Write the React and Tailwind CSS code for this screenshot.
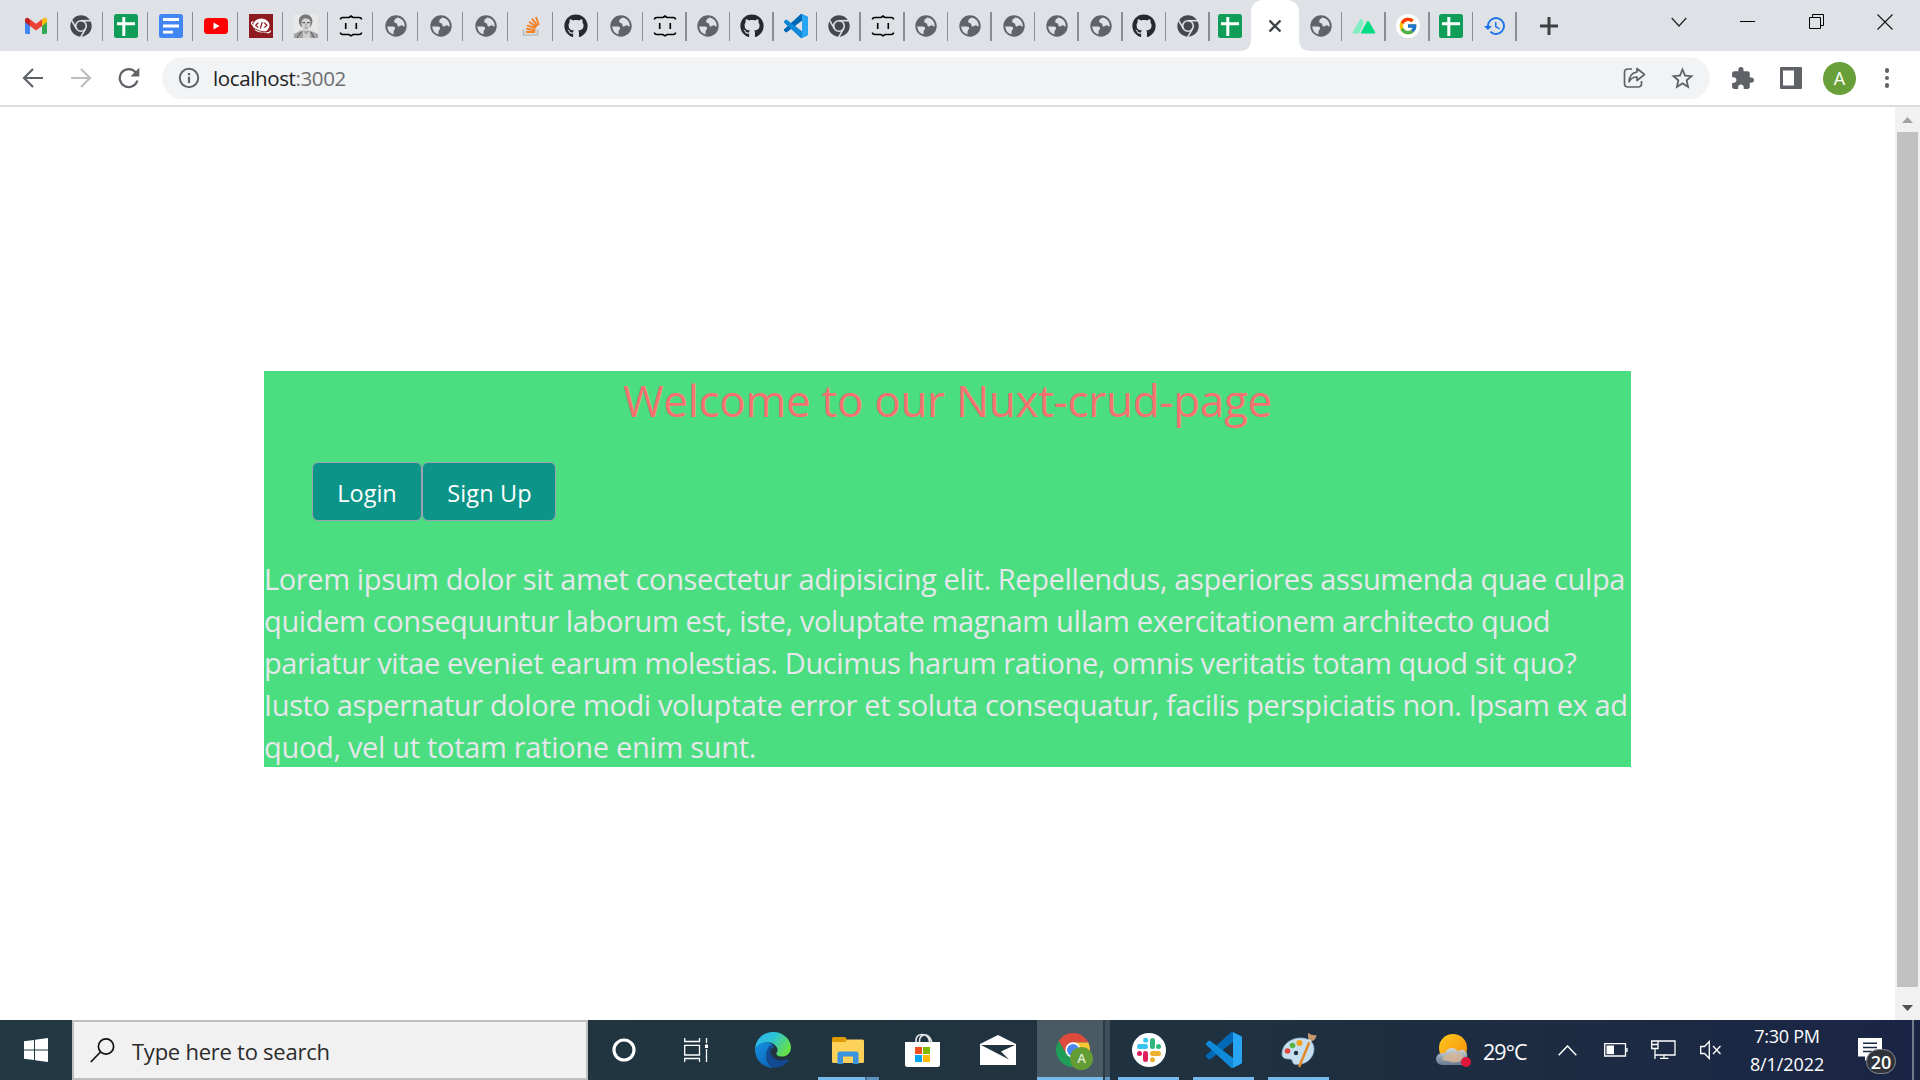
import React from "react";
import { FaGithub } from "react-icons/fa";
import { FcGoogle } from "react-icons/fc";
import { MdHistory, MdExtension, MdStarBorder } from "react-icons/md";

const VS_PATH =
  "M23.15 2.587L18.21.21a1.494 1.494 0 0 0-1.705.29l-9.46 8.63-4.12-3.128a.999.999 0 0 0-1.276.057L.327 7.261A1 1 0 0 0 .326 8.74L3.899 12 .326 15.26a1 1 0 0 0 .001 1.479L1.65 17.94a.999.999 0 0 0 1.276.057l4.12-3.128 9.46 8.63a1.492 1.492 0 0 0 1.704.29l4.942-2.377A1.5 1.5 0 0 0 24 20.06V3.939a1.5 1.5 0 0 0-.85-1.352zm-5.146 14.861L10.826 12l7.178-5.448v10.896z";

function VSCode({ size = 24 }) {
  return (
    <svg width={size} height={size} viewBox="0 0 24 24">
      <path d={VS_PATH} fill="#0a7fcf" />
      <path d="M.33 15.26a1 1 0 0 0 0 1.48l1.32 1.2a1 1 0 0 0 1.28.06L17.99 6.55V.1a1.5 1.5 0 0 0-1.5.4z" fill="#0069b5" />
      <path d="M.33 8.74a1 1 0 0 1 0-1.48l1.32-1.2a1 1 0 0 1 1.28-.06L17.99 17.45V23.9a1.5 1.5 0 0 1-1.5-.4z" fill="#1089d8" />
      <path d="M18 .12L23.15 2.59A1.5 1.5 0 0 1 24 3.94V20.06a1.5 1.5 0 0 1-.85 1.35L18 23.88z" fill="#27a5f2" />
    </svg>
  );
}

function Gmail() {
  return (
    <svg width="24" height="24" viewBox="0 0 24 24">
      <path d="M1 6v12.5A1.5 1.5 0 0 0 2.500 20H6V11z" fill="#4285f4" />
      <path d="M23 6v12.500A1.500 1.500 0 0 1 21.500 20H18V11z" fill="#34a853" />
      <path d="M18 5.500V12l5-4V6c0-2.200-2.400-2.900-3.800-1.800z" fill="#fbbc04" />
      <path d="M6 5.500V12L1 8V6c0-2.200 2.400-2.900 3.800-1.800z" fill="#c5221f" />
      <path d="M6 5.200l6 4.500 6-4.500V12l-6 4.500L6 12z" fill="#ea4335" />
    </svg>
  );
}

function ChromeGray() {
  return (
    <svg width="24" height="24" viewBox="0 0 24 24">
      <circle cx="12" cy="12" r="10.7" fill="#45494d" />
      <g stroke="#dee1e6" strokeWidth="1.6" fill="none">
        <circle cx="12" cy="12" r="5.300" />
        <path d="M12 6.700H23" />
        <path d="M12 6.700H23" transform="rotate(120 12 12)" />
        <path d="M12 6.700H23" transform="rotate(240 12 12)" />
      </g>
    </svg>
  );
}

function Sheets() {
  return (
    <svg width="24" height="24" viewBox="0 0 24 24">
      <rect width="24" height="24" rx="2.500" fill="#0f9d58" />
      <path d="M3 9.800H21M9.800 3V22" stroke="#fff" strokeWidth="3" />
    </svg>
  );
}

function Docs() {
  return (
    <svg width="24" height="24" viewBox="0 0 24 24">
      <rect width="24" height="24" rx="2.500" fill="#4285f4" />
      <path d="M4 5.500H20M4 12H20M4 18.200H14" stroke="#fff" strokeWidth="2.800" />
    </svg>
  );
}

function YouTube() {
  return (
    <svg width="24" height="24" viewBox="0 0 24 24">
      <rect y="4" width="24" height="16" rx="3.500" fill="#f00" />
      <path d="M9.500 8.600v6.800l6-3.400z" fill="#fff" />
    </svg>
  );
}

function CodePlanet() {
  return (
    <svg width="24" height="24" viewBox="0 0 24 24">
      <rect width="24" height="24" fill="#8e1b20" />
      <ellipse cx="12.300" cy="11.500" rx="8.200" ry="7" fill="#fff" />
      <path d="M4.500 8C1 7.500 2 11 8 14.800S21.500 20.300 21.500 16.500" fill="none" stroke="#fff" strokeWidth="1.200" />
      <path d="M9.300 8.800l-2.600 2.400 2.600 2.400M15.300 8.800l2.600 2.400-2.600 2.400M13.300 8l-2 6.500" fill="none" stroke="#8e1b20" strokeWidth="1.200" />
      <path d="M5 14.300q6 4 13 3.800" fill="none" stroke="#8e1b20" strokeWidth=".900" />
    </svg>
  );
}

function Portrait() {
  return (
    <svg width="24" height="24" viewBox="0 0 24 24">
      <rect width="24" height="24" fill="#e8e8e8" />
      <path d="M0 24v-4l7-3.500h9l8 3.500v4z" fill="#a2a2a2" />
      <path d="M5 9C4 2 9 0 12.500.500S19.500 4 18 10l-1.500 3H7z" fill="#777" />
      <path d="M7.500 8Q9 3.500 12 4.500Q16 4 16.500 8Q17 13 13.500 16.500Q11.500 18 9.800 16.500Q7 13 7.500 8Z" fill="#d2d2d2" />
      <path d="M8.500 8.600h2.600M13 8.600h2.600" stroke="#5c5c5c" strokeWidth="1.200" />
      <path d="M12 9.500v3M10.300 14h3.600" stroke="#8a8a8a" strokeWidth=".900" />
      <path d="M9 17l3 3.500 4-3.500v7H9z" fill="#cfcfcf" />
      <path d="M3 24l4-6M20 24l-3-6" stroke="#555" />
    </svg>
  );
}

function Braces() {
  return (
    <svg width="24" height="24" viewBox="0 0 24 24" fill="none" stroke="#000" strokeWidth="1.600">
      <path d="M1.500 5.500Q1.500 3.500 4 3.500H10L12 2L14 3.500H20Q22.500 3.500 22.500 5.500" />
      <path d="M1.500 18.500Q1.500 20.500 4 20.500H10L12 21.800L14 20.500H20Q22.500 20.500 22.500 18.500" />
      <path d="M6.700 9V15M17.300 9V15" />
    </svg>
  );
}

function Globe() {
  return (
    <svg width="24" height="24" viewBox="0 0 24 24">
      <circle cx="12" cy="12" r="10.700" fill="#606367" />
      <path d="M13.500 3.400C10.500 5 9.800 6.300 10.300 8C10.800 9.300 12.200 8.600 13 9.700C13.700 10.800 12.900 12 14.300 12.500C15.900 13 16.200 11.200 17.700 11.300C19.200 11.400 19 12.800 20.800 12.500A8.800 8.800 0 0 0 13.500 3.400Z" fill="#dee1e6" />
      <path d="M3.200 12.500H8.600C10.500 12.500 11.300 13.300 11.100 14.600C11 15.700 9.900 15.800 9.700 17C9.500 18.300 9.500 19 9.500 20.400A8.900 8.900 0 0 1 3.200 12.500Z" fill="#dee1e6" />
    </svg>
  );
}

function Nuxt() {
  return (
    <svg width="24" height="24" viewBox="0 0 24 24">
      <path d="M1.500 19.500Q.300 19.500 1 18L8 5.500Q9 4 10 5.300L12 8.500L7 19.500Z" fill="#80eec0" />
      <path d="M9.500 19.500Q8.500 19.500 9.200 18L15 7.600Q16 6.200 17 7.600L23 18Q23.800 19.500 22.300 19.500Z" fill="#00dc82" />
    </svg>
  );
}

function GoogleIcon() {
  return (
    <span className="grid size-6 place-items-center rounded-full bg-white">
      <FcGoogle size={20} />
    </span>
  );
}

const GitHub = () => <FaGithub size={24} color="#24292f" />;
const History = () => <MdHistory size={24} color="#1a73e8" />;

function StackOverflow() {
  return (
    <svg width="24" height="24" viewBox="0 0 24 24" fill="none">
      <path d="M4.500 15.500V21H18.500V15.500" stroke="#bcbbbb" strokeWidth="1.700" />
      <g stroke="#f48024" strokeWidth="1.900">
        <path d="M7 18H16.200M7.200 14.700L16.300 16.200M8 11.300L16.700 14.200M10 7.700L17.600 12.900M13 4.700L18.600 12M17 3L19.800 11" />
      </g>
    </svg>
  );
}

function Tab({ icon: I, wide }) {
  return (
    <div
      className={
        "relative flex shrink-0 items-center justify-center " +
        (wide ? "w-[45px]" : "w-[43.6px]")
      }
    >
      <I />
      <span className="absolute right-0 top-[12px] h-[29px] w-[1.5px] bg-[#8a8d92]" />
    </div>
  );
}

const WIDE = [Gmail, ChromeGray, Sheets, Docs, YouTube, CodePlanet, Portrait, Braces, Globe, Globe, Globe, StackOverflow, GitHub, Globe];
const NARROW = [Braces, Globe, GitHub, VSCode, ChromeGray, Braces, Globe, Globe, Globe, Globe, Globe, GitHub, ChromeGray];
const AFTER = [Globe, Nuxt, GoogleIcon, Sheets, History];

function TabStrip() {
  return (
    <div className="flex h-[51px] bg-[#dee1e6] pl-[13px]">
      {WIDE.map((I, i) => <Tab key={i} icon={I} wide />)}
      {NARROW.map((I, i) => <Tab key={i} icon={I} />)}
      <div className="flex w-[41px] shrink-0 items-center justify-center"><Sheets /></div>
      <div className="relative flex w-[48px] shrink-0 items-center justify-center rounded-t-[12px] bg-white">
        <svg className="absolute bottom-0 -left-[10px]" width="10" height="12"><path d="M10 0V12H0Q10 11 10 0Z" fill="#fff" /></svg>
        <svg className="absolute bottom-0 -right-[10px]" width="10" height="12"><path d="M0 0V12H10Q0 11 0 0Z" fill="#fff" /></svg>
        <svg width="14" height="14" viewBox="0 0 14 14"><path d="M1.500 1.500L12.500 12.500M12.500 1.500L1.500 12.500" stroke="#3c4043" strokeWidth="2.300" /></svg>
      </div>
      {AFTER.map((I, i) => <Tab key={i} icon={I} />)}
      <div className="flex w-[64px] items-center justify-center">
        <svg width="18" height="18" viewBox="0 0 18 18"><path d="M9 0V18M0 9H18" stroke="#3c4043" strokeWidth="3" /></svg>
      </div>
      <div className="ml-auto flex h-[43px] items-center">
        <div className="grid w-[68px] place-items-center"><svg width="16" height="10" viewBox="0 0 16 10" fill="none"><path d="M.700 1L8 9L15.300 1" stroke="#222" strokeWidth="1.200" /></svg></div>
        <div className="grid w-[69px] place-items-center"><div className="h-px w-[15px] bg-black" /></div>
        <div className="grid w-[69px] place-items-center">
          <svg width="15" height="15" viewBox="0 0 15 15" fill="none" stroke="#000"><path d="M.500 3.500H11.500V14.500H.500ZM3.500 3.500V.500H14.500V11.500H11.500" /></svg>
        </div>
        <div className="grid w-[69px] place-items-center pr-px">
          <svg width="16" height="16" viewBox="0 0 16 16"><path d="M.500 .500L15.500 15.500M15.500 .500L.500 15.500" stroke="#111" strokeWidth="1.100" /></svg>
        </div>
      </div>
    </div>
  );
}

function Toolbar() {
  return (
    <div className="flex h-[56px] items-center border-b-2 border-[#dadce0] bg-white pl-[9px] text-[#5f6368]">
      <div className="grid w-[48px] place-items-center">
        <svg width="22" height="22" viewBox="0 0 22 22" fill="none" stroke="#5f6368" strokeWidth="2.200"><path d="M21 11H2.500M11 2L2 11L11 20" /></svg>
      </div>
      <div className="grid w-[48px] place-items-center">
        <svg width="22" height="22" viewBox="0 0 22 22" fill="none" stroke="#bcbec0" strokeWidth="2.200"><path d="M1 11H19.500M11 2L20 11L11 20" /></svg>
      </div>
      <div className="grid w-[48px] place-items-center">
        <svg width="22" height="22" viewBox="0 0 22 22"><path d="M17.800 5.500A9 9 0 1 0 19.400 13.500" fill="none" stroke="#5f6368" strokeWidth="2.200" /><path d="M21.300 .800V9.500H12.500Z" fill="#5f6368" /></svg>
      </div>
      <div className="ml-[9px] flex h-[42px] w-[1548px] items-center rounded-full bg-[#f1f3f4] pl-[16px] pr-[14px]">
        <svg width="22" height="22" viewBox="0 0 22 22"><circle cx="11" cy="11" r="9.200" fill="none" stroke="#5f6368" strokeWidth="2" /><path d="M11 9.800V16M11 6V8.200" stroke="#5f6368" strokeWidth="2.200" /></svg>
        <span className="ml-[13px] text-[20.5px] leading-[30px] tracking-[-0.38px] text-[#202124]">
          localhost<span className="text-[#6b6f73]">:3002</span>
        </span>
        <svg className="ml-auto" width="24" height="24" viewBox="0 0 24 24" fill="none" stroke="#5f6368" strokeWidth="1.700" strokeLinejoin="round">
          <path d="M10 3H6Q2.500 3 2.500 6.500V17.500Q2.500 21 6 21H16Q19.500 21 19.500 17.500V15" />
          <path d="M15 2.500L22.500 8.500L15 14.500V11Q9.500 11 7 15.800Q7.500 7 15 6Z" />
        </svg>
        <MdStarBorder className="ml-[23px]" size={27} color="#5f6368" />
      </div>
      <div className="grid w-[65px] place-items-center"><MdExtension size={25} /></div>
      <div className="grid w-[31px] place-items-center">
        <svg width="22" height="22" viewBox="0 0 22 22"><rect width="22" height="22" rx="1" fill="#5f6368" /><rect x="3" y="3.500" width="11" height="15" fill="#fff" /></svg>
      </div>
      <div className="ml-[17px] grid size-[33px] place-items-center rounded-full bg-[#689f38] text-[18px] text-white">A</div>
      <div className="ml-[28.5px] flex flex-col items-center gap-[3px]">
        <span className="size-[4.500px] rounded-full bg-[#5f6368]" />
        <span className="size-[4.500px] rounded-full bg-[#5f6368]" />
        <span className="size-[4.500px] rounded-full bg-[#5f6368]" />
      </div>
    </div>
  );
}

function Page() {
  return (
    <div className="flex h-[913px] bg-white">
      <div className="flex flex-1 justify-center pt-[264px]">
        <div className="h-[396px] w-[1367px] bg-[#4ade80]">
          <h1 className="pt-[2px] text-center text-[44px] leading-[54px] tracking-[-0.29px] text-[#f87171]">Welcome to our Nuxt-crud-page</h1>
          <div className="flex pl-[48px] pt-[35px] text-[23.5px] text-white">
            <button className="h-[59px] w-[110px] rounded-[6px] border-[1.5px] border-[#9ca3af] bg-[#0d9488] pt-[5px]">Login</button>
            <button className="h-[59px] w-[134px] rounded-[6px] border-[1.5px] border-[#9ca3af] bg-[#0d9488] pt-[5px] pl-px tracking-[0.1px]">Sign Up</button>
          </div>
          <p className="whitespace-nowrap pt-[37px] text-[29px] leading-[42px] text-[#e5e7eb]">
            <span className="block tracking-[-0.371px]">Lorem ipsum dolor sit amet consectetur adipisicing elit. Repellendus, asperiores assumenda quae culpa</span>
            <span className="block tracking-[-0.364px]">quidem consequuntur laborum est, iste, voluptate magnam ullam exercitationem architecto quod</span>
            <span className="block tracking-[-0.38px]">pariatur vitae eveniet earum molestias. Ducimus harum ratione, omnis veritatis totam quod sit quo?</span>
            <span className="block tracking-[-0.372px]">Iusto aspernatur dolore modi voluptate error et soluta consequatur, facilis perspiciatis non. Ipsam ex ad</span>
            <span className="block tracking-[-0.31px]">quod, vel ut totam ratione enim sunt.</span>
          </p>
        </div>
      </div>
      <div className="flex w-[25px] flex-col items-center bg-[#f1f1f1]">
        <div className="grid h-[25px] place-items-center"><svg width="11" height="6"><path d="M0 6L5.500 0L11 6Z" fill="#a3a3a3" /></svg></div>
        <div className="h-[855px] w-[21px] bg-[#c1c1c1]" />
        <div className="grid flex-1 place-items-center pt-[9px]"><svg width="11" height="6"><path d="M0 0L5.500 6L11 0Z" fill="#505050" /></svg></div>
      </div>
    </div>
  );
}

function Edge() {
  return (
    <svg width="36" height="36" viewBox="0 0 36 36">
      <defs>
        <linearGradient id="eg" x1="0" y1="0" x2="1" y2="0.500"><stop offset="0" stopColor="#2fb4f0" /><stop offset=".500" stopColor="#2cc3d5" /><stop offset="1" stopColor="#63e04b" /></linearGradient>
        <linearGradient id="eb" x1="0" y1="0" x2="0.600" y2="1"><stop offset="0" stopColor="#1593e0" /><stop offset="1" stopColor="#0b66bd" /></linearGradient>
      </defs>
      <path d="M0 17C0 30 10 36 19 36C10 32 8 20 19 15C16 8 4 8 0 17Z" fill="url(#eb)" />
      <path d="M13 16C8 24 14 36 22 35.500C28 34.500 32 31 33.500 28.500C34 27.500 33.500 26.800 32 27.500C22 31 14.500 25 15.500 18C16 15.500 18 14.500 19.500 14.500C18 12 15 13 13 16Z" fill="#124a94" />
      <path d="M0 17C1 6 9 0 18 0C29 0 36 8 36 15.500C36 21.500 31 25 26 24.500C21.500 24 20.500 22 22.300 19.500C24 16 19 10 12 10C6 10 2 13 0 17Z" fill="url(#eg)" />
    </svg>
  );
}

function Explorer() {
  return (
    <svg width="32" height="27" viewBox="0 0 32 27">
      <path d="M0 1.500Q0 0 1.500 0H13L15 2V5H0Z" fill="#df9b06" />
      <path d="M0 5H13L15.500 2.500H30.500Q32 2.500 32 4V24.500Q32 26 30.500 26H1.500Q0 26 0 24.500Z" fill="#fdd25a" />
      <path d="M5.500 27V17Q5.500 14.500 8 14.500H24Q26.500 14.500 26.500 17V27H21V19.500H11V27Z" fill="#3a93dc" />
    </svg>
  );
}

function Store() {
  return (
    <svg width="35" height="34" viewBox="0 0 35 34">
      <path d="M11 10V8Q11 1.500 17 1.500T24.500 8V10M14.500 10V8Q14.500 3 19 2T26.500 8V10" fill="none" stroke="#e2e5e8" strokeWidth="1.600" />
      <path d="M0 9H35V31.500Q35 34 32.500 34H2.500Q0 34 0 31.500Z" fill="#fff" />
      <path d="M10 14H17V21H10Z" fill="#f25022" /><path d="M18 14H25V21H18Z" fill="#7fba00" />
      <path d="M10 22H17V29H10Z" fill="#00a4ef" /><path d="M18 22H25V29H18Z" fill="#ffb900" />
    </svg>
  );
}

function Mail() {
  return (
    <svg width="36" height="30" viewBox="0 0 36 30">
      <path d="M0 9L18 0L36 9V30H0Z" fill="#fff" />
      <path d="M1 10H35L21 16.500L29 24.500Z" fill="#20343f" />
    </svg>
  );
}

function ChromeColor() {
  return (
    <div className="relative size-[34px]">
      <svg width="34" height="34" viewBox="-17 -17 34 34">
        <defs><clipPath id="cc"><circle r="17" /></clipPath></defs>
        <g clipPath="url(#cc)">
          <path d="M-20 -20H20V-7.500H0L-6.800 4L-15.500 -11Z" fill="#dd4b3e" />
          <path d="M0 -7.500H20V20H-2L6.700 4Z" fill="#fcc934" />
          <path d="M-20 -20L-14.500 -9.500L-6.700 4L0 7.500H4.500L-3 20H-20Z" fill="#1e9e57" />
        </g>
        <circle r="7.700" fill="#fff" /><circle r="6" fill="#4a87ee" />
      </svg>
      <span className="absolute left-[14px] top-[14px] grid size-[23px] place-items-center rounded-full bg-[#639c35] text-[13px] font-semibold text-[#dfead6]">A</span>
    </div>
  );
}

function Slack() {
  return (
    <svg width="34" height="34" viewBox="0 0 34 34" strokeLinecap="round" strokeWidth="5">
      <circle cx="17" cy="17" r="17" fill="#fff" />
      <path d="M7.500 13.500H13.500" stroke="#36c5f0" /><circle cx="13.700" cy="7.300" r="2.500" fill="#36c5f0" />
      <path d="M20.500 7.500V13.500" stroke="#2eb67d" /><circle cx="26.500" cy="13.500" r="2.500" fill="#2eb67d" />
      <path d="M20.500 20.500H26.500" stroke="#ecb22e" /><circle cx="20.500" cy="26.700" r="2.500" fill="#ecb22e" />
      <path d="M13.500 20.500V26.500" stroke="#e01e5a" /><circle cx="7.500" cy="20.500" r="2.500" fill="#e01e5a" />
    </svg>
  );
}

function Paint() {
  return (
    <svg width="36" height="36" viewBox="0 0 36 36">
      <path d="M1 22C1 12 10 6 20 6C29 6 33 11 33 17C33 26 25 33 15 32.500C10 32 13 28 9 27C4 27 1 26 1 22Z" fill="#c5def0" stroke="#8fb4cf" strokeWidth=".700" />
      <circle cx="15" cy="21" r="2.200" fill="#20343f" />
      <circle cx="6.500" cy="19" r="2.800" fill="#e2483c" /><circle cx="11.500" cy="13.500" r="2.800" fill="#5bb342" /><circle cx="18.500" cy="11" r="3" fill="#f5a21b" />
      <path d="M28 11L18.500 34" stroke="#e58a2c" strokeWidth="2.600" strokeLinecap="round" />
      <path d="M26.500 9L29.500 11L31 8.500L28 6.500Z" fill="#d9d9d9" />
      <path d="M27 6L27 1Q32 4 35.500 3Q35 7.500 31.500 9Z" fill="#c49a6c" />
    </svg>
  );
}

function Weather() {
  return (
    <svg width="36" height="33" viewBox="0 0 36 33">
      <defs>
        <linearGradient id="sun" x1="0" y1="0" x2="1" y2="1"><stop offset="0" stopColor="#ffcb1f" /><stop offset="1" stopColor="#f58a08" /></linearGradient>
        <linearGradient id="cl" x1="0" y1="0" x2="0" y2="1"><stop offset="0" stopColor="#cfd8e6" /><stop offset="1" stopColor="#6f8299" /></linearGradient>
      </defs>
      <circle cx="17" cy="14" r="14" fill="url(#sun)" />
      <path d="M6 31A6 6 0 0 1 6 19Q8 18.500 9 19Q11 14 16 14Q20 14 22 17.500Q26 14.500 29 17T31 22Q34 31 28 31Z" fill="url(#cl)" opacity=".920" />
      <path d="M6 26Q8 21 13 20.500Q17 17.500 21 20Q26 19 28 25Q20 31 12 27Z" fill="#dcb894" opacity=".750" />
      <circle cx="30" cy="28" r="5" fill="#e0153a" />
    </svg>
  );
}

function TaskItem({ children, running }) {
  return (
    <div className="relative grid h-full w-[75px] shrink-0 place-items-center">
      {children}
      {running && <span className="absolute bottom-0 left-[7px] h-[3px] w-[61px] bg-[#76b9ed]" />}
    </div>
  );
}

function Taskbar() {
  return (
    <div className="flex h-[60px] items-center bg-linear-to-r from-[#223943] via-[#20323f] via-60% to-[#1a2545] text-white">
      <div className="grid w-[72px] place-items-center">
        <svg width="24" height="24" viewBox="0 0 24 24" fill="#fff"><path d="M0 3.300L10 1.900V11.500H0ZM11 1.700L24 0V11.500H11ZM0 12.500H10V22.100L0 20.700ZM11 12.500H24V24L11 22.300Z" /></svg>
      </div>
      <div className="flex h-[60px] w-[516px] items-center border-2 border-[#bfbfbf] bg-[#f1f1f1] pl-[16px]">
        <svg width="25" height="25" viewBox="0 0 25 25" fill="none" stroke="#111" strokeWidth="1.700"><circle cx="16" cy="8.500" r="7.600" /><path d="M10.500 14L.800 24" /></svg>
        <span className="ml-[17px] pt-px text-[22px] leading-[30px] tracking-[-0.25px] text-[#2b2b2b]">Type here to search</span>
      </div>
      <div className="grid w-[72px] place-items-center">
        <svg width="24" height="24"><circle cx="12" cy="12" r="10" fill="none" stroke="#fff" strokeWidth="3.200" /></svg>
      </div>
      <div className="grid w-[75px] place-items-center pr-[3px]">
        <svg width="24" height="24" viewBox="0 0 24 24" fill="none" stroke="#fff" strokeWidth="1.300"><path d="M.700 0V3.500H15.500V0M.700 7.300H15.500V17H.700ZM.700 24V20.500H15.500V24M22.500 0V5M22.500 11V24" /><path d="M21 6.500H24V10H21Z" fill="#fff" stroke="none" /></svg>
      </div>
      <TaskItem><Edge /></TaskItem>
      <TaskItem>
        <Explorer />
        <span className="absolute bottom-0 left-[8px] flex h-[3px] w-[61px]">
          <span className="w-[47px] bg-[#76b9ed]" /><span className="w-[2px] bg-[#46708f]" /><span className="flex-1 bg-[#5d92bd]" />
        </span>
      </TaskItem>
      <TaskItem><Store /></TaskItem>
      <TaskItem><Mail /></TaskItem>
      <div className="relative flex h-full w-[76px] shrink-0">
        <div className="ml-[2px] grid w-[66px] place-items-center border-b-[3px] border-[#76b9ed] bg-[#4a5a65] pt-[3px] pl-[6px]"><ChromeColor /></div>
        <div className="w-[2px] bg-[#2b3b46]" />
        <div className="w-[5px] border-b-[3px] border-[#6299c7] bg-[#3e4e5a]" />
      </div>
      <TaskItem running><Slack /></TaskItem>
      <TaskItem running><VSCode size={36} /></TaskItem>
      <TaskItem running><Paint /></TaskItem>
      <div className="ml-auto flex h-full items-center">
        <Weather />
        <span className="ml-[11px] w-[63px] pt-[4px] text-[21.5px] tracking-[-0.95px]">29°C</span>
        <svg className="ml-[12px]" width="19" height="11" fill="none" stroke="#fff" strokeWidth="1.500"><path d="M.700 10.300L9.500 1L18.300 10.300" /></svg>
        <svg className="ml-[27px]" width="24" height="14" fill="none" stroke="#fff" strokeWidth="1.300"><path d="M.700 .700H21.500V13H.700ZM23 5V9" /><path d="M2.500 2.500H10V11.200H2.500Z" fill="#fff" stroke="none" /></svg>
        <svg className="ml-[23px]" width="25" height="20" fill="none" stroke="#fff" strokeWidth="1.300"><path d="M7 1H24V15H4.500M.700 1H7V8.500H.700ZM.700 4.500H7M4 8.500V19M13 15V18M9 18.300H17.500" /></svg>
        <svg className="ml-[24px]" width="22" height="20" fill="none" stroke="#fff" strokeWidth="1.300"><path d="M.700 6.500H4.500L9.300 1.500V18.500L4.500 13.500H.700ZM13 6L20.500 14M20.500 6L13 14" /></svg>
        <div className="ml-[20px] flex w-[90px] flex-col items-center text-[18px] leading-[28px]">
          <span className="tracking-[-0.25px]">7:30 PM</span>
          <span className="tracking-[-0.1px]">8/1/2022</span>
        </div>
        <div className="relative ml-[26px] h-[24px] w-[54px]">
          <svg width="24" height="24" viewBox="0 0 24 24"><path d="M0 0H24V18.500H12L7 23V18.500H0Z" fill="#fff" /><path d="M5 5.300H19M5 9.500H19M5 13.500H14" stroke="#1b2843" strokeWidth="1.400" /></svg>
          <span className="absolute left-[8px] top-[11px] flex h-[25px] w-[30px] items-center justify-center rounded-full border-[1.5px] border-[#85888d] bg-[#30343a] text-[18px] font-semibold leading-none">20</span>
        </div>
        <div className="h-full w-[8px] border-l-2 border-[#737b8b]" />
      </div>
    </div>
  );
}

export default function App() {
  return (
    <div className="h-[1080px] w-[1920px] overflow-hidden bg-white font-['Open_Sans',sans-serif]">
      <TabStrip />
      <Toolbar />
      <Page />
      <Taskbar />
    </div>
  );
}
